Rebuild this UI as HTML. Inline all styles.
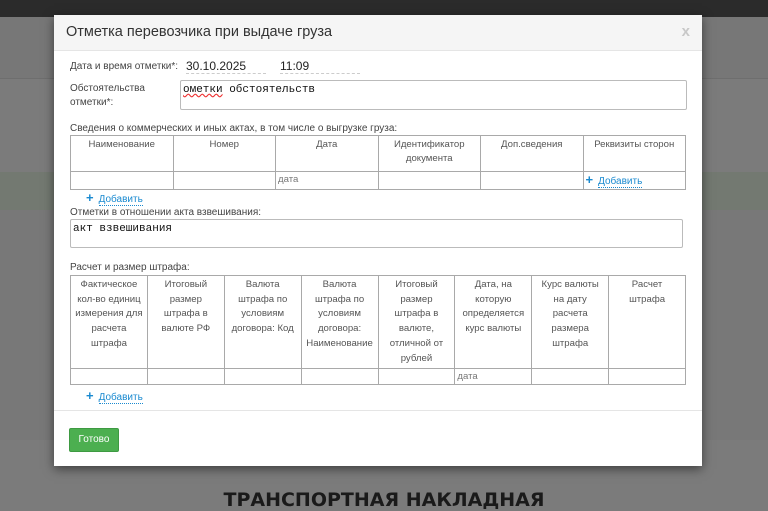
<html><head><style>
body{margin:0;width:768px;height:503px;overflow:hidden;background:#7b7b7b;font-family:"Liberation Sans",sans-serif;position:relative}
.a{position:absolute}
.top{left:0;top:0;width:768px;height:17px;background:#2b2b2b}
.b1{left:0;top:17px;width:768px;height:61px;background:#777;border-bottom:1px solid #6e6e6e}
.g{left:0;top:172px;width:768px;height:38px;background:#737971}
.b2{left:0;top:210px;width:768px;height:230px;background:#787878}
.title{left:0;top:489px;width:768px;text-align:center;font-weight:bold;font-size:19px;color:#1a1a1a;font-family:"DejaVu Sans",sans-serif}
.m{left:54px;top:15px;width:648px;height:451px;background:#fff;box-shadow:0 3px 10px rgba(0,0,0,.5)}
.hd{left:0;top:0;width:648px;height:35px;background:#f5f5f5;border-bottom:1px solid #e5e5e5}
.hd span{position:absolute;left:12px;top:9px;font-size:14.5px;color:#333}
.x{right:12px;top:8px;font-size:15px;color:#c8c8c8;font-weight:bold}
.l{font-size:10px;color:#444}
.in{font-size:12px;color:#222;border-bottom:1px dashed #ccc}
.ta{border:1px solid #bbb;border-radius:2px;font-family:"Liberation Mono",monospace;font-size:11px;color:#111;padding:3px 2px;box-sizing:border-box}
table{position:absolute;border-collapse:collapse;table-layout:fixed}
td{border:1px solid #a9a9a9;font-size:9.6px;color:#555;text-align:center;vertical-align:top;padding:2px 4px;line-height:14.7px}
.t1 td{line-height:14px;padding:2px 6px}
tr.d td{height:15px;padding:0 2px;text-align:left;line-height:15px;border-bottom:1px solid #a9a9a9}
.add{font-size:10px;color:#1a8ad0}
.add b{color:#1a8ad0;font-size:13px;margin-right:5px}
.add u{text-decoration:none;border-bottom:1px dotted #1a8ad0}
.ft{left:0;top:395px;width:648px;border-top:1px solid #e5e5e5}
.btn{left:15px;top:413px;width:48px;height:22px;background:#4caf50;border:1px solid #3e9a42;color:#fff;font-size:10px;text-align:center;line-height:22px;border-radius:2px}
</style></head><body>
<div class="a top"></div><div class="a b1"></div><div class="a g"></div><div class="a b2"></div>
<div class="a title">ТРАНСПОРТНАЯ НАКЛАДНАЯ</div>
<div class="a m">
<div class="a hd"><span>Отметка перевозчика при выдаче груза</span><div class="a x">x</div></div>
<div class="a l" style="left:16px;top:46px">Дата и время отметки*:</div>
<div class="a in" style="left:132px;top:44px;width:80px">30.10.2025</div>
<div class="a in" style="left:226px;top:44px;width:80px">11:09</div>
<div class="a l" style="left:16px;top:67px;line-height:14px">Обстоятельства<br>отметки*:</div>
<div class="a ta" style="left:126px;top:65px;width:507px;height:30px"><span style="text-decoration:underline wavy #e33">ометки</span> обстоятельств</div>
<div class="a l" style="left:16px;top:108px">Сведения о коммерческих и иных актах, в том числе о выгрузке груза:</div>
<table class="t1" style="left:16px;top:120px;width:616px">
<tr style="height:36px"><td>Наименование</td><td>Номер</td><td>Дата</td><td>Идентификатор документа</td><td>Доп.сведения</td><td>Реквизиты сторон</td></tr>
<tr class="d"><td></td><td></td><td style="color:#777">дата</td><td></td><td></td><td class="add" style="padding-left:2px"><b>+</b><u>Добавить</u></td></tr>
</table>
<div class="a add" style="left:32px;top:175px"><b>+</b><u>Добавить</u></div>
<div class="a l" style="left:16px;top:192px">Отметки в отношении акта взвешивания:</div>
<div class="a ta" style="left:16px;top:204px;width:613px;height:29px">акт взвешивания</div>
<div class="a l" style="left:16px;top:247px">Расчет и размер штрафа:</div>
<table style="left:16px;top:260px;width:616px">
<tr style="height:93px"><td>Фактическое кол-во единиц измерения для расчета штрафа</td><td>Итоговый размер штрафа в валюте РФ</td><td>Валюта штрафа по условиям договора: Код</td><td>Валюта штрафа по условиям договора: Наименование</td><td>Итоговый размер штрафа в валюте, отличной от рублей</td><td>Дата, на которую определяется курс валюты</td><td>Курс валюты на дату расчета размера штрафа</td><td>Расчет штрафа</td></tr>
<tr class="d"><td></td><td></td><td></td><td></td><td></td><td style="color:#777">дата</td><td></td><td></td></tr>
</table>
<div class="a add" style="left:32px;top:373px"><b>+</b><u>Добавить</u></div>
<div class="a ft"></div>
<div class="a btn">Готово</div>
</div>
</body></html>
